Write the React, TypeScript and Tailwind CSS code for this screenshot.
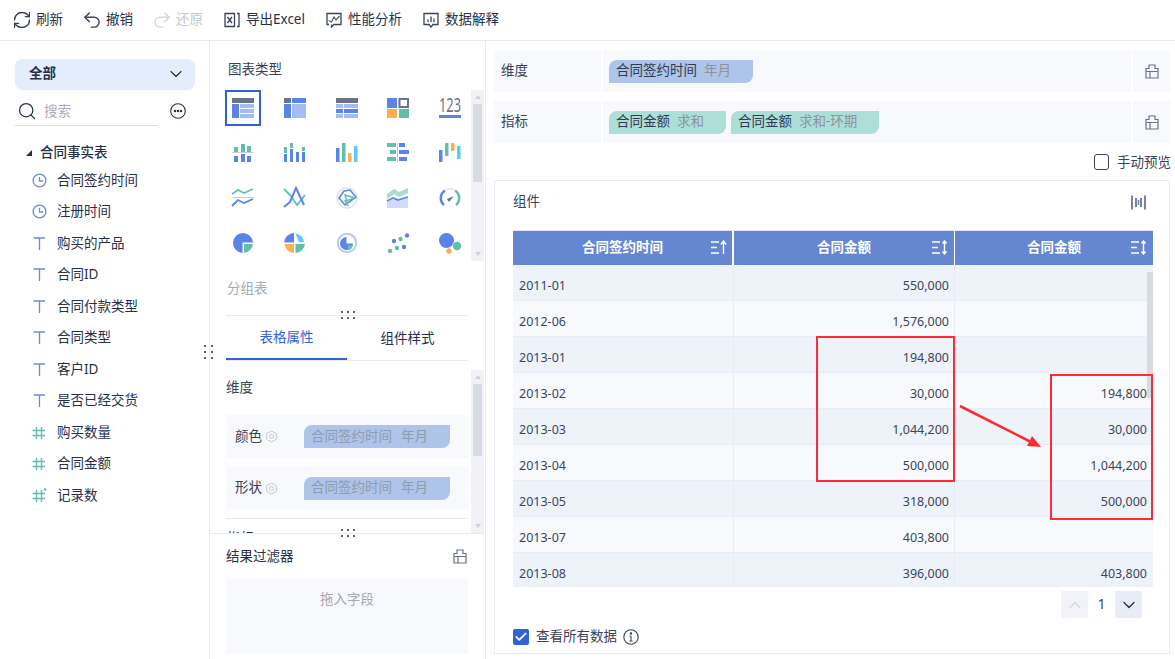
import React from "react";
import { ChevronDown, ChevronUp, RefreshCw, Undo2, Redo2, Search, Check } from "lucide-react";

const BLUE = "#5b84e8";
const LIGHT = "#a3bdf3";
const GRAY = "#6b7389";
const TEAL = "#62bfb0";
const ORANGE = "#fbb04c";
const CYAN = "#5bc8f5";

const R = ({ x, y, w, h, c }: { x: number; y: number; w: number; h: number; c: string }) => (
  <rect x={x} y={y} width={w} height={h} fill={c} />
);

const chartIcons: React.ReactNode[] = [
  <>
    <R x={0} y={0} w={22} h={5} c={GRAY} />
    <R x={0} y={6} w={7} h={14} c={BLUE} />
    <R x={8} y={6} w={14} h={4} c={LIGHT} />
    <R x={8} y={11} w={14} h={4} c={LIGHT} />
    <R x={8} y={16} w={14} h={4} c={LIGHT} />
  </>,
  <>
    <R x={0} y={0} w={7} h={5} c={GRAY} />
    <R x={8} y={0} w={14} h={5} c={BLUE} />
    <R x={0} y={6} w={7} h={14} c={BLUE} />
    <R x={8} y={6} w={14} h={14} c={LIGHT} />
  </>,
  <>
    <R x={0} y={0} w={22} h={5} c={GRAY} />
    {[0, 8, 15].map((x) => (
      <React.Fragment key={x}>
        <R x={x} y={6} w={7} h={4} c={LIGHT} />
        <R x={x} y={11} w={7} h={4} c={BLUE} />
        <R x={x} y={16} w={7} h={4} c={LIGHT} />
      </React.Fragment>
    ))}
  </>,
  <>
    <R x={0} y={0} w={10} h={10} c={BLUE} />
    <rect x={12.5} y={1} width={8.5} height={8} fill="none" stroke={GRAY} strokeWidth={2} />
    <R x={0} y={11} w={10} h={9} c={ORANGE} />
    <R x={12} y={11} w={10} h={9} c={TEAL} />
  </>,
  <>
    <text x={0} y={14} textLength={22} lengthAdjust="spacingAndGlyphs" fontSize={19} fill={GRAY} fontFamily="Noto Sans, sans-serif">123</text>
    <R x={0} y={17} w={22} h={3} c={BLUE} />
  </>,
  <>
    <R x={2} y={4} w={4} h={5} c={TEAL} />
    <R x={9} y={1} w={4} h={8} c={TEAL} />
    <R x={15} y={3} w={4} h={6} c={TEAL} />
    <R x={0} y={9} w={22} h={1} c="#c9ced9" />
    <R x={2} y={13} w={4} h={6} c={BLUE} />
    <R x={9} y={11} w={4} h={8} c={BLUE} />
    <R x={15} y={13} w={4} h={6} c={BLUE} />
  </>,
  <>
    <R x={0} y={4} w={3} h={6} c={TEAL} />
    <R x={0} y={11} w={3} h={8} c={BLUE} />
    <R x={6} y={0} w={3} h={5} c={TEAL} />
    <R x={6} y={6} w={3} h={13} c={BLUE} />
    <R x={12} y={9} w={3} h={10} c={BLUE} />
    <R x={18} y={4} w={3} h={4} c={TEAL} />
    <R x={18} y={9} w={3} h={10} c={BLUE} />
  </>,
  <>
    <R x={0} y={5} w={3.5} h={14} c={BLUE} />
    <R x={6} y={0} w={3.5} h={19} c={TEAL} />
    <R x={12} y={10} w={3.5} h={9} c={ORANGE} />
    <R x={18} y={3} w={3.5} h={16} c={CYAN} />
  </>,
  <>
    <R x={0} y={0} w={9} h={4} c={TEAL} />
    <R x={3} y={7} w={6} h={4} c={TEAL} />
    <R x={0} y={14} w={9} h={4} c={TEAL} />
    <R x={10} y={0} w={1} h={19} c="#c9ced9" />
    <R x={12} y={0} w={6} h={4} c={BLUE} />
    <R x={12} y={7} w={10} h={4} c={BLUE} />
    <R x={12} y={14} w={8} h={4} c={BLUE} />
  </>,
  <>
    <R x={0} y={7} w={3.5} h={12} c={BLUE} />
    <R x={6} y={0} w={3.5} h={13} c={TEAL} />
    <R x={12} y={0} w={3.5} h={8} c={ORANGE} />
    <R x={18} y={3} w={3.5} h={13} c={CYAN} />
  </>,
  <>
    <polyline points="0,6 6,2 12,5 21,1" fill="none" stroke={TEAL} strokeWidth={1.6} />
    <R x={0} y={9} w={22} h={1} c="#c9ced9" />
    <polyline points="0,18 6,12 12,15 21,11" fill="none" stroke={BLUE} strokeWidth={1.8} />
  </>,
  <>
    <polyline points="0,1 7,8 13,17 21,7" fill="none" stroke={TEAL} strokeWidth={1.8} />
    <polyline points="0,19 6,14 12,0 20,17" fill="none" stroke={BLUE} strokeWidth={2} />
  </>,
  <>
    <circle cx={11} cy={10} r={10} fill="none" stroke="#dfe2ea" strokeWidth={1.4} />
    <polygon points="3,10 8,3 14,2 20,9 9,17" fill="none" stroke={BLUE} strokeWidth={1.6} />
    <polygon points="9,7 19,10 9,13 12,18" fill="none" stroke={TEAL} strokeWidth={1.4} />
  </>,
  <>
    <polygon points="0,14 6,11 11,13 21,10 21,20 0,20" fill="#cfdcf9" />
    <polyline points="0,13 6,10 11,12 21,9" fill="none" stroke={BLUE} strokeWidth={1.7} />
    <polygon points="0,6 7,1 12,4 21,0 21,5 12,9 7,6 0,11" fill="#a9dcd3" />
  </>,
  <>
    <path d="M5 17 A9 9 0 0 1 6 2.5" fill="none" stroke={BLUE} strokeWidth={2.5} />
    <path d="M7 1.8 A9 9 0 0 1 15 1.8" fill="none" stroke="#dfe2ea" strokeWidth={1.5} />
    <path d="M16 2.5 A9 9 0 0 1 17 17" fill="none" stroke={TEAL} strokeWidth={2.5} />
    <path d="M8 11 L15 8 L10 14 Z" fill={GRAY} />
  </>,
  <>
    <path d="M21 9.5 A10 10 0 1 0 10.5 20 V9.5 Z" fill={BLUE} />
    <path d="M12 11 H21 A10 10 0 0 1 12 20 Z" fill={TEAL} />
  </>,
  <>
    <path d="M10 0 V9.5 H0.2 A10 10 0 0 1 10 0 Z" fill={BLUE} />
    <path d="M11.5 0.5 A10 10 0 0 1 20 9 H15 Z" fill={CYAN} />
    <path d="M0.5 11 H10 V20 A10 10 0 0 1 0.5 11 Z" fill={ORANGE} />
    <path d="M11.5 11 H21 A10 10 0 0 1 11.5 20 Z" fill={TEAL} />
  </>,
  <>
    <circle cx={11} cy={10} r={9.2} fill="none" stroke="#b9cbf5" strokeWidth={2} />
    <path d="M11 1 A9 9 0 0 1 20 10" fill="none" stroke="#b9cbf5" strokeWidth={2} />
    <path d="M20 11 A9 9 0 0 1 12 19.2" fill="none" stroke="#b5e2da" strokeWidth={2} />
    <path d="M10.5 4 V10.5 H17 A6.5 6.5 0 1 1 10.5 4 Z" fill={BLUE} />
    <path d="M12 12 H17 A6 6 0 0 1 12 17 Z" fill={TEAL} />
  </>,
  <>
    <circle cx={3} cy={18} r={2.2} fill={TEAL} />
    <circle cx={7} cy={8} r={2.2} fill={BLUE} />
    <circle cx={10} cy={15} r={2.2} fill={TEAL} />
    <circle cx={13.5} cy={6} r={2.2} fill={TEAL} />
    <circle cx={17} cy={14} r={2.2} fill={BLUE} />
    <circle cx={20} cy={2.5} r={2.2} fill={BLUE} />
  </>,
  <>
    <circle cx={7.5} cy={7.5} r={7.5} fill={BLUE} />
    <circle cx={18} cy={13} r={4.2} fill={TEAL} />
    <circle cx={10} cy={18} r={2.7} fill={ORANGE} />
  </>,
];

const Scrollbar = ({ className, thumb }: { className: string; thumb: string }) => (
  <div className={`relative w-[13px] shrink-0 bg-[#f1f2f5] ${className}`}>
    <div className="absolute left-1/2 top-[5px] -ml-[3px] h-0 w-0 border-x-[3px] border-b-[4px] border-x-transparent border-b-[#cdd0d8]" />
    <div className={`absolute left-[2px] right-[2px] top-[14px] bg-[#d8dbe1] ${thumb}`} />
    <div className="absolute bottom-[5px] left-1/2 -ml-[3px] h-0 w-0 border-x-[3px] border-t-[4px] border-x-transparent border-t-[#cdd0d8]" />
  </div>
);

const DragDots = ({ vertical }: { vertical?: boolean }) => (
  <svg width={vertical ? 10 : 14} height={vertical ? 14 : 8} className="block">
    {(vertical
      ? [[1, 1], [8, 1], [1, 7], [8, 7], [1, 13], [8, 13]]
      : [[1, 1], [7, 1], [13, 1], [1, 7], [7, 7], [13, 7]]
    ).map(([x, y]) => (
      <rect key={`${x}-${y}`} x={x - 1} y={y - 1} width={2} height={2} fill="#5a6378" />
    ))}
  </svg>
);

// the little box/"drop" icon used at the end of each field row
const BoxIcon = () => (
  <svg width="14" height="15" viewBox="0 0 14 15" fill="none" stroke="#6b7389" strokeWidth="1.2">
    <path d="M1 14 V4.5 H4 V1 H10 V4.5 H13 V14 Z M1 7.5 H13 M5 7.5 V14" />
  </svg>
);

const ClockIcon = () => (
  <svg width="15" height="15" viewBox="0 0 15 15" fill="none" stroke="#6d8bd4" strokeWidth="1.3">
    <circle cx="7.5" cy="7.5" r="6.4" />
    <path d="M7.5 4 V8 H11" />
  </svg>
);

const TextIcon = () => (
  <svg width="15" height="15" viewBox="0 0 15 15" fill="none" stroke="#6d8bd4" strokeWidth="1.3">
    <path d="M1.5 2 H13 M7.5 2 V14" />
  </svg>
);

const HashIcon = ({ star }: { star?: boolean }) => (
  <svg width="15" height="15" viewBox="0 0 15 15" fill="none" stroke="#62bfb0" strokeWidth="1.4">
    <path d="M4.5 2 V14 M9.5 2 V14 M0.5 5.5 H13 M0.5 10.5 H13" />
    {star && <circle cx="13" cy="1.5" r="1.3" fill="#62bfb0" stroke="none" />}
  </svg>
);

const SortIcon = ({ up }: { up?: boolean }) => (
  <svg width="16" height="15" viewBox="0 0 16 15" fill="none" stroke="#fff" strokeWidth="1.4">
    <path d="M0 2 H8 M0 7.5 H6 M0 13 H8" />
    {up ? (
      <path d="M12.5 14 V2 M10 4.5 L12.5 1 L15 4.5" />
    ) : (
      <path d="M12.5 1 V14 M10.5 3.5 L12.5 1 L14.5 3.5 M10.5 11.5 L12.5 14 L14.5 11.5" />
    )}
  </svg>
);

const ExcelIcon = () => (
  <svg width="16" height="16" viewBox="0 0 16 16" fill="none" stroke="#3a4258" strokeWidth="1.3">
    <path d="M1 1.5 H10.5 V14.5 H1 Z M13 1.5 H15 V14.5 H13" />
    <path d="M3.5 5 L8 11 M8 5 L3.5 11" />
  </svg>
);

const TrendIcon = () => (
  <svg width="16" height="16" viewBox="0 0 16 16" fill="none" stroke="#3a4258" strokeWidth="1.3">
    <path d="M3 12.5 H1 V1.5 H15 V12.5 H8 L5.5 15 V12.5" />
    <path d="M2.5 8.5 L5.5 10 L8 5 L10 8 L13.5 4" stroke="#5a6378" />
  </svg>
);

const ExplainIcon = () => (
  <svg width="16" height="16" viewBox="0 0 16 16" fill="none" stroke="#3a4258" strokeWidth="1.3">
    <path d="M6 12.5 H1 V1.5 H15 V12.5 H10 L8 15 Z" />
    <path d="M5 7.5 V10 M8 4.5 V10 M11 6.5 V10" />
  </svg>
);

const toolbar = [
  { icon: <RefreshCw size={16} viewBox="2.5 2.5 19 19" strokeWidth={1.7} color="#3a4258" />, label: "刷新", cls: "text-[#283048]" },
  { icon: <Undo2 size={16} viewBox="3 3 18 18" strokeWidth={1.6} color="#3a4258" />, label: "撤销", cls: "text-[#283048]" },
  { icon: <Redo2 size={16} viewBox="3 3 18 18" strokeWidth={1.6} color="#d3d6dc" />, label: "还原", cls: "text-[#c5c8d0]" },
  { icon: <ExcelIcon />, label: "导出Excel", cls: "text-[#283048]" },
  { icon: <TrendIcon />, label: "性能分析", cls: "text-[#283048]" },
  { icon: <ExplainIcon />, label: "数据解释", cls: "text-[#283048]" },
];

const fields = [
  { name: "合同签约时间", icon: <ClockIcon /> },
  { name: "注册时间", icon: <ClockIcon /> },
  { name: "购买的产品", icon: <TextIcon /> },
  { name: "合同ID", icon: <TextIcon /> },
  { name: "合同付款类型", icon: <TextIcon /> },
  { name: "合同类型", icon: <TextIcon /> },
  { name: "客户ID", icon: <TextIcon /> },
  { name: "是否已经交货", icon: <TextIcon /> },
  { name: "购买数量", icon: <HashIcon /> },
  { name: "合同金额", icon: <HashIcon /> },
  { name: "记录数", icon: <HashIcon star /> },
];

const rows = [
  ["2011-01", "550,000", ""],
  ["2012-06", "1,576,000", ""],
  ["2013-01", "194,800", ""],
  ["2013-02", "30,000", "194,800"],
  ["2013-03", "1,044,200", "30,000"],
  ["2013-04", "500,000", "1,044,200"],
  ["2013-05", "318,000", "500,000"],
  ["2013-07", "403,800", ""],
  ["2013-08", "396,000", "403,800"],
];

const FieldPill = ({ name, tag, cls }: { name: string; tag: string; cls: string }) => (
  <div className={`flex h-[23px] items-center gap-[7px] rounded-br-lg rounded-tl-lg pl-[7px] pr-[22px] ${cls}`}>
    <span className="text-[#2f3a52]">{name}</span>
    <span className="text-[#8b93a1]">{tag}</span>
  </div>
);

const SettingRow = ({ label, className }: { label: string; className: string }) => (
  <div className={`flex items-center bg-[#f8f9fd] pl-[9px] ${className}`}>
    <span className="w-[30px] text-[#3a4258]">{label}</span>
    <svg width="13" height="13" viewBox="0 0 13 13" fill="none" stroke="#c5c9d2" strokeWidth="1">
      <path d="M6.5 1 L11.3 3.7 V9.3 L6.5 12 L1.7 9.3 V3.7 Z" />
      <circle cx="6.5" cy="6.5" r="2" />
    </svg>
    <div className="ml-[26px] flex h-[23px] w-[146px] items-center gap-[9px] rounded-br-lg rounded-tl-lg bg-[#aec4e8] pl-[7px] text-[#8f9bb0]">
      <span>合同签约时间</span>
      <span>年月</span>
    </div>
  </div>
);

const DropRow = ({ label, children }: { label: string; children: React.ReactNode }) => (
  <div className="flex h-[42px] gap-[2px]">
    <div className="flex w-[107px] items-center bg-[#f8f9fd] pl-[7px] text-[#3a4258]">{label}</div>
    <div className="flex flex-1 items-center gap-[5px] bg-[#f8f9fd] pl-[6px]">{children}</div>
    <div className="flex w-[37px] items-center justify-center bg-[#f8f9fd]">
      <BoxIcon />
    </div>
  </div>
);

export default function App() {
  return (
    <div
      className="relative flex h-[659px] w-[1175px] flex-col overflow-hidden bg-white text-[13.5px] leading-none text-[#283048]"
      style={{ fontFamily: '"Noto Sans", "Noto Sans CJK SC", sans-serif' }}
    >
      {/* top toolbar */}
      <div className="flex h-[41px] shrink-0 items-center gap-[21px] border-b border-[#e8eaf2] pl-[14px]">
        {toolbar.map((t) => (
          <div key={t.label} className={`flex items-center gap-[6px] ${t.cls}`}>
            {t.icon}
            <span>{t.label}</span>
          </div>
        ))}
      </div>

      <div className="flex min-h-0 flex-1">
        {/* field list */}
        <div className="relative w-[210px] shrink-0 border-r border-[#e8eaf2] pl-[15px]">
          <div className="mt-[18px] flex h-[31px] w-[180px] items-center justify-between rounded-lg bg-[#e3edfc] pb-[2px] pl-[14px] pr-[9px] font-bold">
            <span>全部</span>
            <ChevronDown size={20} strokeWidth={1.4} />
          </div>
          <div className="mt-[6px] flex h-[30px] items-center">
            <div className="flex h-full w-[143px] items-center border-b border-[#dcdee4] pl-[2px]">
              <Search size={20} strokeWidth={1.5} color="#283048" />
              <span className="ml-[7px] pt-[2px] text-[#a9adb8]">搜索</span>
            </div>
            <svg width="16" height="16" viewBox="0 0 16 16" fill="none" stroke="#283048" strokeWidth="1.1" className="ml-[12px]">
              <circle cx="8" cy="8" r="7.3" />
              <circle cx="5" cy="8" r="0.7" fill="#283048" />
              <circle cx="8" cy="8" r="0.7" fill="#283048" />
              <circle cx="11" cy="8" r="0.7" fill="#283048" />
            </svg>
          </div>
          <div className="mt-[17px] flex h-[20px] items-center pl-[11px]">
            <div className="h-0 w-0 border-b-[6px] border-l-[6px] border-b-[#283048] border-l-transparent" />
            <span className="ml-[8px] font-medium">合同事实表</span>
          </div>
          <div className="mt-[1.5px] flex flex-col">
            {fields.map((f) => (
              <div key={f.name} className="flex h-[31.5px] items-center pl-[17px]">
                {f.icon}
                <span className="ml-[10px]">{f.name}</span>
              </div>
            ))}
          </div>
          <div className="absolute right-[-5px] top-[304px]">
            <DragDots vertical />
          </div>
        </div>

        {/* chart type + properties */}
        <div className="relative flex w-[276px] shrink-0 flex-col overflow-hidden border-r border-[#e8eaf2]">
          <div className="h-[274px] shrink-0 pl-[15px]">
            <div className="ml-[3px] flex h-[49px] items-center pt-[9px] text-[#3a4258]">图表类型</div>
            <div className="flex">
              <div className="grid grid-cols-[repeat(5,36px)] grid-rows-[repeat(4,36px)] gap-x-[15.75px] gap-y-[9px]">
                {chartIcons.map((icon, i) => (
                  <div
                    key={i}
                    className={`flex items-center justify-center ${i === 0 ? "border-2 border-[#2f63d6]" : ""}`}
                  >
                    <svg width="22" height="20" viewBox="0 0 22 20" className="overflow-visible">
                      {icon}
                    </svg>
                  </div>
                ))}
              </div>
              <Scrollbar className="ml-[3px] h-[171px]" thumb="h-[78px]" />
            </div>
            <div className="ml-[2px] mt-[21px] text-[#a5a9b3]">分组表</div>
          </div>
          <div className="relative ml-[16px] mr-[17px] flex h-[46px] shrink-0 border-y border-[#e8eaf2]">
            <div className="flex w-[121px] items-center justify-center border-b-2 border-[#2f63d6] pt-[2px] text-[#2f63d6]">表格属性</div>
            <div className="flex flex-1 items-center justify-center pt-[2px]">组件样式</div>
            <div className="absolute left-[115px] top-[-5px]">
              <DragDots />
            </div>
          </div>
          <div className="flex h-[172px] shrink-0 overflow-hidden pl-[16px] pt-[9px]">
            <div className="w-[242px] shrink-0 pt-[9px]">
              <div className="flex h-[17px] items-center text-[#3a4258]">维度</div>
              <SettingRow label="颜色" className="mt-[19px] h-[43px]" />
              <SettingRow label="形状" className="mt-[9px] h-[42px]" />
              <div className="mt-[9px] border-t border-[#e8eaf2] pl-px pt-[13px]">指标</div>
            </div>
            <Scrollbar className="ml-[3px] h-[163px]" thumb="h-[72px]" />
          </div>
          <div className="relative z-10 flex flex-1 flex-col border-t border-[#e8eaf2] bg-white pl-[16px] pr-[17px]">
            <div className="absolute left-[131px] top-[-5px]">
              <DragDots />
            </div>
            <div className="flex h-[45px] items-center justify-between pr-[1px]">
              <span>结果过滤器</span>
              <BoxIcon />
            </div>
            <div className="flex h-[75px] justify-center bg-[#f8f9fd] pt-[14px] text-[#a5a9b3]">拖入字段</div>
          </div>
        </div>

        {/* canvas */}
        <div className="relative min-w-0 flex-1 pl-[8px] pr-[5px] pt-[9px]">
          <DropRow label="维度">
            <FieldPill name="合同签约时间" tag="年月" cls="bg-[#aec4e8]" />
          </DropRow>
          <div className="mt-[9px]">
            <DropRow label="指标">
              <FieldPill name="合同金额" tag="求和" cls="bg-[#aeded8]" />
              <FieldPill name="合同金额" tag="求和-环期" cls="bg-[#aeded8]" />
            </DropRow>
          </div>
          <div className="flex h-[37px] items-center justify-end">
            <div className="h-[16px] w-[15px] rounded-[3px] border border-[#3a4258]" />
            <span className="ml-[8px] w-[53px] whitespace-nowrap pt-[3px] text-[#3a4258]">手动预览</span>
          </div>

          <div className="relative h-[474px] border border-[#e8eaf2] px-[18px]">
            <div className="flex h-[42px] items-center justify-between pr-[5px] text-[#3a4258]">
              <span>组件</span>
              <svg width="15" height="15" viewBox="0 0 15 15" fill="none" stroke="#3a4258" strokeWidth="1.3">
                <path d="M1 0.5 V14.5 M14 0.5 V14.5 M5 3 V12 M10 3 V12" />
                <path d="M7.5 5 V10" stroke="#5b84e8" strokeWidth="1.6" />
              </svg>
            </div>
            <div className="mt-[7px] h-[357px] w-[640px] overflow-hidden bg-[#eef3fa]">
              <div className="grid h-[35px] grid-cols-[221px_221px_198px] border-t border-[#dfe6f5] bg-[#6587d2] font-bold text-white">
                <div className="relative flex items-center justify-center border-r-2 border-white">
                  合同签约时间
                  <div className="absolute right-[5px] top-[9px]"><SortIcon up /></div>
                </div>
                <div className="relative flex items-center justify-center border-r border-white">
                  合同金额
                  <div className="absolute right-[6px] top-[9px]"><SortIcon /></div>
                </div>
                <div className="relative flex items-center justify-center">
                  合同金额
                  <div className="absolute right-[6px] top-[9px]"><SortIcon /></div>
                </div>
              </div>
              {rows.map((r, i) => (
                <div
                  key={r[0]}
                  className={`grid h-[36px] grid-cols-[221px_221px_198px] border-b border-[#e8ecf5] text-[12.5px] text-[#3a4560] ${
                    i % 2 === 0 ? "bg-[#eef3fa]" : "bg-[#f8f9fd]"
                  }`}
                >
                  <div className="flex items-center border-r border-[#e8ecf5] pl-[6px] pt-[8px]">{r[0]}</div>
                  <div className="flex items-center justify-end border-r border-[#e8ecf5] pr-[5px] pt-[8px]">{r[1]}</div>
                  <div className="flex items-center justify-end pr-[6px] pt-[8px]">{r[2]}</div>
                </div>
              ))}
            </div>
            {/* table scrollbar */}
            <div className="absolute left-[652px] top-[91px] h-[126px] w-[6px] bg-[#d8dbe2]" />

            <div className="absolute left-[566px] top-[410px] flex items-center">
              <div className="flex h-[27px] w-[27px] items-center justify-center rounded-[2px] bg-[#f1f3f9]">
                <ChevronUp size={20} strokeWidth={1.4} color="#d3d6dc" />
              </div>
              <span className="w-[27px] text-center text-[#3a4258]">1</span>
              <div className="flex h-[27px] w-[27px] items-center justify-center rounded-[2px] bg-[#e8ecf7]">
                <ChevronDown size={20} strokeWidth={1.6} color="#283048" />
              </div>
            </div>

            <div className="absolute left-[18px] top-[448px] flex items-center">
              <div className="flex h-[16px] w-[16px] items-center justify-center rounded-[2px] bg-[#2f63d6]">
                <Check size={14} strokeWidth={3} color="#fff" />
              </div>
              <span className="ml-[7px] text-[#3a4258]">查看所有数据</span>
              <svg width="16" height="16" viewBox="0 0 16 16" fill="none" stroke="#3a4258" strokeWidth="1.1" className="ml-[6px]">
                <circle cx="8" cy="8" r="7.2" />
                <path d="M8 7 V12 M6.5 7 H8 M6.5 12 H9.5" />
                <circle cx="8" cy="4.4" r="0.7" fill="#3a4258" />
              </svg>
            </div>
          </div>
        </div>
      </div>

      {/* red annotation over the table */}
      <div className="absolute left-[816px] top-[336px] h-[146px] w-[139px] border-2 border-[#ff2a33]" />
      <div className="absolute left-[1050px] top-[374px] h-[146px] w-[103px] border-2 border-[#ff2a33]" />
      <svg className="absolute left-[955px] top-[400px]" width="90" height="52" viewBox="0 0 90 52">
        <line x1="5" y1="6" x2="78" y2="43" stroke="#ff2a33" strokeWidth="2.6" />
        <polygon points="86,47 72,46 77,36" fill="#ff2a33" />
      </svg>
    </div>
  );
}
